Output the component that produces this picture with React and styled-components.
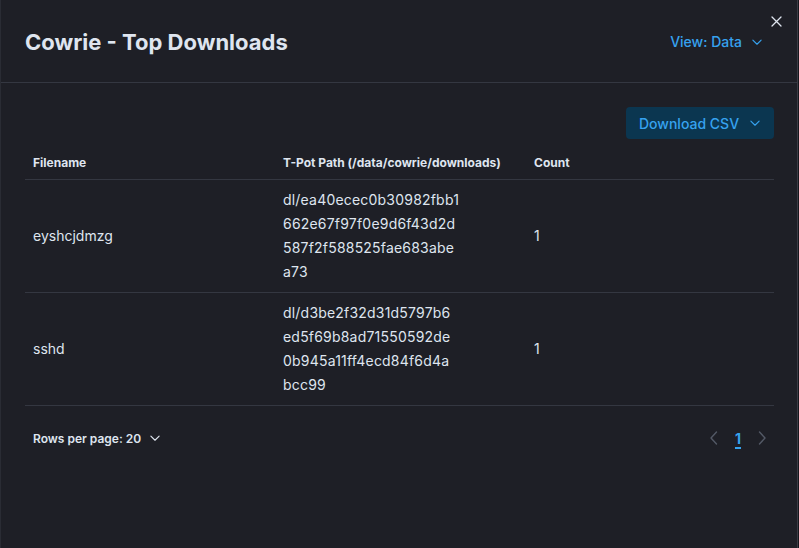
import React from "react";
import styled, { createGlobalStyle } from "styled-components";

const Global = createGlobalStyle`
  html, body { margin: 0; padding: 0; background: #16171c; }
  body { font-family: Inter, "Noto Sans", "Liberation Sans", sans-serif; -webkit-font-smoothing: antialiased; }
  * { box-sizing: border-box; }
`;

const Modal = styled.div`
  position: relative;
  width: 798px;
  height: 548px;
  background: #1e1f26;
  border-left: 1px solid #2a2c34;
  border-right: 1px solid #3a3c45;
  color: #dfe5ef;
  display: flex;
  flex-direction: column;
`;

const Header = styled.header`
  height: 83px;
  display: flex;
  align-items: center;
  justify-content: space-between;
  padding: 1px 34px 0 24px;
  border-bottom: 1px solid #343741;
`;

const Title = styled.h1`
  margin: 0;
  font-size: 22px;
  font-weight: 700;
  line-height: 30px;
  color: #dfe5ef;
  letter-spacing: 0;
`;

const LinkButton = styled.button`
  background: none;
  border: 0;
  padding: 0;
  font: inherit;
  font-size: 14px;
  font-weight: 500;
  color: #36a2ef;
  display: flex;
  align-items: center;
  gap: 9px;
  cursor: pointer;
`;

const Close = styled.button`
  position: absolute;
  top: 15px;
  right: 15px;
  width: 12px;
  height: 12px;
  padding: 0;
  background: none;
  border: 0;
  display: flex;
  align-items: center;
  justify-content: center;
`;

const Body = styled.div`
  padding: 24px 23px 0 24px;
  display: flex;
  flex-direction: column;
`;

const Toolbar = styled.div`
  display: flex;
  justify-content: flex-end;
  margin-bottom: 8px;
`;

const FillButton = styled.button`
  height: 32px;
  width: 148px;
  border: 0;
  border-radius: 4px;
  background: #0b3650;
  color: #36a2ef;
  font: inherit;
  font-size: 14px;
  font-weight: 500;
  display: flex;
  align-items: center;
  justify-content: space-between;
  padding: 0 13px 0 13px;
`;

const Table = styled.table`
  width: 100%;
  border-collapse: collapse;
  table-layout: fixed;
`;

const Th = styled.th`
  text-align: left;
  font-size: 12px;
  font-weight: 700;
  line-height: 16px;
  padding: 8px 8px 8px 8px;
  color: #dfe5ef;
  border-bottom: 1px solid #343741;
  width: ${(p) => p.$w || "auto"};
`;

const Td = styled.td`
  font-size: 14px;
  line-height: 24px;
  padding: 8px;
  vertical-align: middle;
  border-bottom: 1px solid #343741;
  color: #dfe5ef;
`;

const PathLine = styled.span`
  display: block;
  letter-spacing: 0.2px;
`;

const Footer = styled.div`
  height: 32px;
  margin-top: 16px;
  display: flex;
  align-items: center;
  justify-content: space-between;
  padding: 0 6px 0 8px;
`;

const RowsButton = styled.button`
  background: none;
  border: 0;
  padding: 0;
  font: inherit;
  font-size: 12px;
  font-weight: 600;
  color: #dfe5ef;
  display: flex;
  align-items: center;
  gap: 8px;
`;

const Pager = styled.nav`
  display: flex;
  align-items: center;
  gap: 13px;
`;

const PageNum = styled.span`
  font-size: 14px;
  font-weight: 700;
  color: #36a2ef;
  text-decoration: underline;
  text-underline-offset: 3px;
  text-decoration-thickness: 1.5px;
  width: 10px;
  text-align: center;
`;

const Chevron = ({ color = "#36a2ef", size = 12 }) => (
  <svg width={size} height={size} viewBox="0 0 16 16" fill="none">
    <path d="M2.5 5.5L8 11l5.5-5.5" stroke={color} strokeWidth="1.5" strokeLinecap="round" strokeLinejoin="round" />
  </svg>
);

const Arrow = ({ dir }) => (
  <svg width="12" height="16" viewBox="0 0 12 16" fill="none">
    <path d={dir === "left" ? "M8.5 2L3 8l5.5 6" : "M3.5 2L9 8l-5.5 6"} stroke="#535966" strokeWidth="1.4" strokeLinecap="round" strokeLinejoin="round" />
  </svg>
);

const rows = [
  {
    name: "eyshcjdmzg",
    path: ["dl/ea40ecec0b30982fbb1", "662e67f97f0e9d6f43d2d", "587f2f588525fae683abe", "a73"],
    count: 1,
  },
  {
    name: "sshd",
    path: ["dl/d3be2f32d31d5797b6", "ed5f69b8ad71550592de", "0b945a11ff4ecd84f6d4a", "bcc99"],
    count: 1,
  },
];

export default function App() {
  return (
    <>
      <Global />
      <Modal>
        <Close aria-label="Close">
          <svg width="11" height="11" viewBox="0 0 11 11">
            <path d="M1 1l9 9M10 1l-9 9" stroke="#dfe5ef" strokeWidth="1.3" strokeLinecap="round" />
          </svg>
        </Close>
        <Header>
          <Title>Cowrie - Top Downloads</Title>
          <LinkButton>
            View: Data <Chevron />
          </LinkButton>
        </Header>
        <Body>
          <Toolbar>
            <FillButton>
              Download CSV <Chevron />
            </FillButton>
          </Toolbar>
          <Table>
            <thead>
              <tr>
                <Th $w="250px">Filename</Th>
                <Th $w="251px">T-Pot Path (/data/cowrie/downloads)</Th>
                <Th>Count</Th>
              </tr>
            </thead>
            <tbody>
              {rows.map((r) => (
                <tr key={r.name}>
                  <Td>{r.name}</Td>
                  <Td>
                    {r.path.map((l) => (
                      <PathLine key={l}>{l}</PathLine>
                    ))}
                  </Td>
                  <Td>{r.count}</Td>
                </tr>
              ))}
            </tbody>
          </Table>
          <Footer>
            <RowsButton>
              Rows per page: 20 <Chevron color="#dfe5ef" size={12} />
            </RowsButton>
            <Pager>
              <Arrow dir="left" />
              <PageNum>1</PageNum>
              <Arrow dir="right" />
            </Pager>
          </Footer>
        </Body>
      </Modal>
    </>
  );
}
